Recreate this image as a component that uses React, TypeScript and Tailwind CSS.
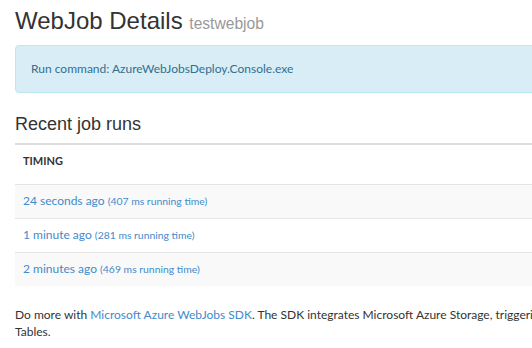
import React from 'react';

const runs = [
  { ago: '24 seconds ago', ms: 407 },
  { ago: '1 minute ago', ms: 281 },
  { ago: '2 minutes ago', ms: 469 },
];

const WebJobDetailsPage: React.FC = () => {
  return (
    <div className="w-[532px] h-[348px] overflow-hidden bg-white">
      <div className="w-[940px] ml-[15px] font-['Lato',sans-serif] text-[#333]">
        <h1 className="pt-[8px] text-[24px] leading-[1.1] font-normal font-['Liberation_Sans',Arial,sans-serif]">
          WebJob Details <small className="text-[15.6px] text-[#999]">testwebjob</small>
        </h1>

        {/* Run command */}
        <div className="mt-[11px] h-[48px] px-[15px] flex items-center rounded-[4px] border border-[#bce8f1] bg-[#d9edf7] text-[12px] text-[#31708f]">
          Run command: AzureWebJobsDeploy.Console.exe
        </div>

        <h2 className="mt-[22px] text-[18px] leading-[1.1] font-normal font-['Liberation_Sans',Arial,sans-serif]">
          Recent job runs
        </h2>

        {/* Runs table */}
        <table className="mt-[8px] w-full border-collapse">
          <thead>
            <tr className="border-t-2 border-[#ddd]">
              <th className="h-[40px] px-[8px] pt-[8px] text-left align-top text-[11px] font-bold uppercase">Timing</th>
            </tr>
          </thead>
          <tbody>
            {runs.map((run, i) => (
              <tr key={run.ago} className={`border-t border-[#e5e5e5] ${i % 2 === 0 ? 'bg-[#f9f9f9]' : 'bg-white'}`}>
                <td className="h-[34px] px-[8px] align-middle text-[12px] text-[#428bca]">
                  {run.ago} <span className="text-[10.4px]">({run.ms} ms running time)</span>
                </td>
              </tr>
            ))}
          </tbody>
        </table>

        <p className="mt-[20px] text-[12px] leading-[17px]">
          Do more with <a className="text-[#428bca]">Microsoft Azure WebJobs SDK</a>. The SDK integrates Microsoft Azure
          Storage, triggering a function in your program when items are added to Queues, Blobs, or
          <br />
          Tables.
        </p>
      </div>
    </div>
  );
};

export default WebJobDetailsPage;
